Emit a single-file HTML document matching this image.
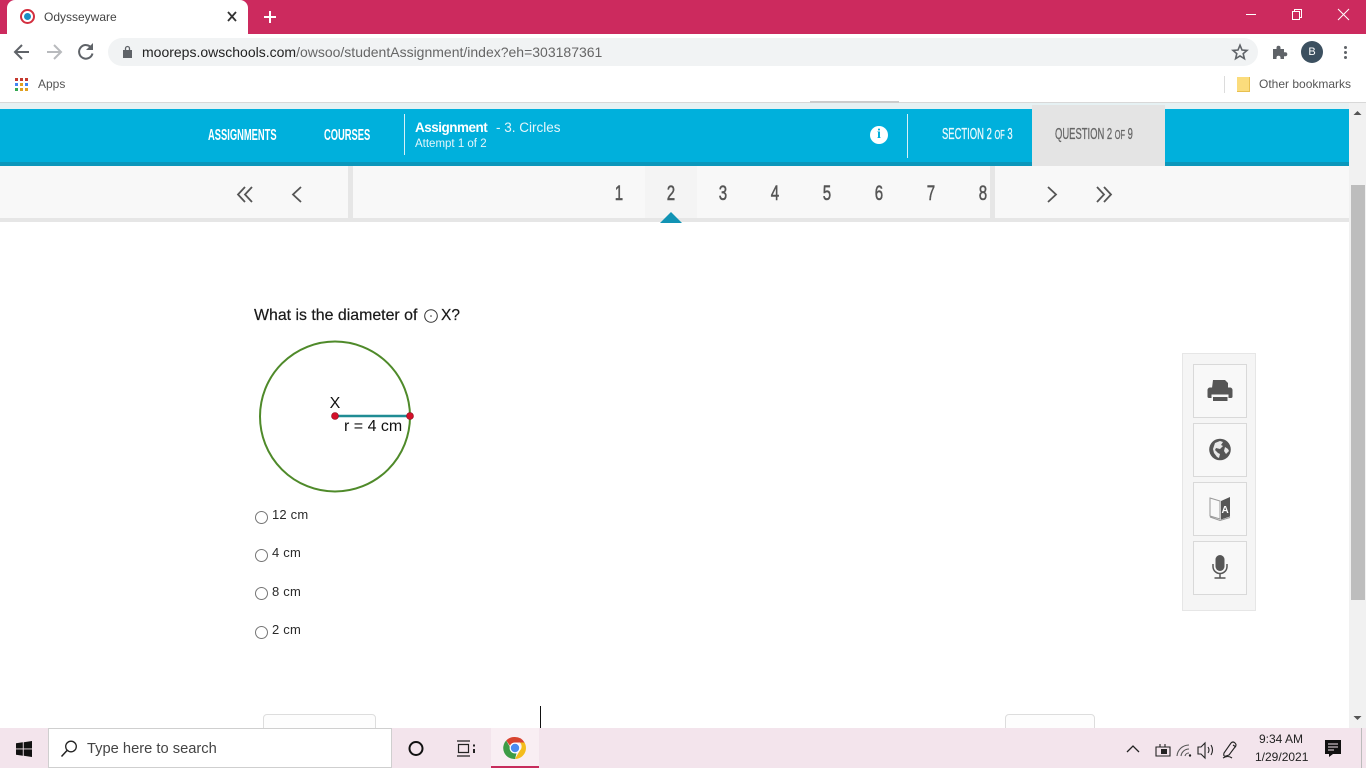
<!DOCTYPE html>
<html><head><meta charset="utf-8"><title>Odysseyware</title>
<style>
html,body{margin:0;padding:0;width:1366px;height:768px;overflow:hidden;background:#fff;font-family:"Liberation Sans",sans-serif}
.a{position:absolute;white-space:nowrap}
.r{position:absolute}
svg{position:absolute;overflow:visible}
.n{transform-origin:0 0;font-size:16px;line-height:18px}
.num{position:absolute;top:183px;width:30px;text-align:center;font:21px/22px "Liberation Sans",sans-serif;color:#555;transform:scaleX(.72);-webkit-text-stroke:.5px #555}
.opt{position:absolute;left:272px;font-size:13px;line-height:16px;color:#2a2a2a;letter-spacing:.2px}
.rad{position:absolute;left:255px;width:11px;height:11px;border:1px solid #767676;border-radius:50%;background:#fff}
.tool{position:absolute;left:1193px;width:52px;background:#f8f8f8;border:1px solid #d9d9d9}
</style></head><body>
<!-- Chrome tabstrip -->
<div class="r" style="left:0;top:0;width:1366px;height:34px;background:#cc2a5e"></div>
<div class="r" style="left:7px;top:0;width:241px;height:34px;background:#fff;border-radius:8px 8px 0 0"></div>
<div class="r" style="left:20px;top:9px;width:11px;height:11px;border:2px solid #d32f3f;border-radius:50%;background:#fff"></div>
<div class="r" style="left:24px;top:13px;width:7px;height:7px;border-radius:50%;background:#1b8fc4"></div>
<div class="a" style="left:44px;top:9px;font-size:12px;line-height:16px;color:#444">Odysseyware</div>
<svg style="left:0;top:0" width="1366" height="34">
<path d="M228 12l8 9M236 12l-8 9" stroke="#333" stroke-width="1.8" fill="none"/>
<path d="M270 11v12M264 17h12" stroke="#fff" stroke-width="2" fill="none"/>
<path d="M1246 14.500h10" stroke="#fff" stroke-width="1" fill="none"/>
<path d="M1292.500 11.500h7v8h-7zM1294.500 11.500v-2h7v8h-2" stroke="#fff" stroke-width="1" fill="none"/>
<path d="M1338 9l11 11M1349 9l-11 11" stroke="#fff" stroke-width="1" fill="none"/>
</svg>
<!-- Toolbar -->
<svg style="left:0;top:34px" width="110" height="36">
<path d="M29 18H16M22 11l-7 7 7 7" stroke="#5f6368" stroke-width="2" fill="none"/>
<path d="M47 18h13M54 11l7 7-7 7" stroke="#b8babd" stroke-width="2" fill="none"/>
<path d="M91.500 14a6.800 6.800 0 1 0 1 5.500" stroke="#5f6368" stroke-width="2" fill="none"/>
<path d="M93 9v7h-7z" fill="#5f6368"/>
</svg>
<div class="r" style="left:108px;top:38px;width:1150px;height:28px;background:#f1f3f4;border-radius:14px"></div>
<svg style="left:122px;top:45px" width="12" height="14"><path d="M1.500 5.500h8v7h-8z" fill="#5f6368" stroke="#5f6368"/><path d="M3.500 5.500V3.500a2 2 0 0 1 4 0v2" stroke="#5f6368" stroke-width="1.300" fill="none"/></svg>
<div class="a" style="left:142px;top:44px;font-size:14px;line-height:16px;color:#666"><span style="color:#222">mooreps.owschools.com</span>/owsoo/studentAssignment/index?eh=303187361</div>
<svg style="left:1230px;top:42px" width="20" height="20"><path d="M10 3.200l2 4.800 5 .4-3.800 3.300 1.200 5-4.400-2.700-4.400 2.700 1.200-5-3.800-3.300 5-.4z" fill="none" stroke="#5f6368" stroke-width="1.600"/></svg>
<svg style="left:1270px;top:42px" width="20" height="20"><path d="M3 7h3.500V5.800a2 2 0 0 1 4 0V7H14v3.200h1.300a2 2 0 0 1 0 4H14V17H10.500v-1.300a2 2 0 0 0-4 0V17H3z" fill="#5f6368"/></svg>
<div class="r" style="left:1301px;top:41px;width:22px;height:22px;border-radius:50%;background:#3c5060;color:#fff;font-size:11px;line-height:22px;text-align:center">B</div>
<div class="r" style="left:1343.500px;top:46px;width:3px;height:3px;background:#5f6368;border-radius:50%;box-shadow:0 5px 0 #5f6368,0 10px 0 #5f6368"></div>
<!-- Bookmarks -->
<svg style="left:15px;top:78px" width="14" height="14">
<g><rect x="0" y="0" width="3" height="3" fill="#c5392f"/><rect x="5" y="0" width="3" height="3" fill="#c5392f"/><rect x="10" y="0" width="3" height="3" fill="#c5392f"/><rect x="0" y="5" width="3" height="3" fill="#4285f4"/><rect x="5" y="5" width="3" height="3" fill="#e0a020"/><rect x="10" y="5" width="3" height="3" fill="#4285f4"/><rect x="0" y="10" width="3" height="3" fill="#34a853"/><rect x="5" y="10" width="3" height="3" fill="#e0a020"/><rect x="10" y="10" width="3" height="3" fill="#e0a020"/></g></svg>
<div class="a" style="left:38px;top:76px;font-size:12px;line-height:16px;color:#555">Apps</div>
<div class="r" style="left:1224px;top:76px;width:1px;height:17px;background:#dcdcdc"></div>
<div class="r" style="left:1237px;top:77px;width:12px;height:14px;background:#fbdc7c;border-right:1px solid #e8c050;border-bottom:1px solid #e8c050"></div>
<div class="a" style="left:1259px;top:76px;font-size:12px;line-height:16px;color:#555">Other bookmarks</div>
<div class="r" style="left:0;top:102px;width:1366px;height:1px;background:#d8d8d8"></div>
<div class="r" style="left:810px;top:101px;width:89px;height:2px;background:#ccc"></div>
<div class="r" style="left:0;top:103px;width:1349px;height:6px;background:#e6f1f3"></div>
<!-- Blue header -->
<div class="r" style="left:0;top:109px;width:1349px;height:53px;background:#00b0dc"></div>
<div class="r" style="left:0;top:162px;width:1349px;height:4px;background:#0b97bb"></div>
<div class="r" style="left:1032px;top:105px;width:133px;height:61px;background:#e4e4e4"></div>
<div class="a n" style="left:208px;top:127px;color:#fff;font-weight:700;transform:scaleX(.585)">ASSIGNMENTS</div>
<div class="a n" style="left:324px;top:127px;color:#fff;font-weight:700;transform:scaleX(.585)">COURSES</div>
<div class="r" style="left:404px;top:114px;width:1px;height:41px;background:#d5f1f8"></div>
<div class="a" style="left:415px;top:119px;font-size:13.500px;line-height:17px;color:#fff;letter-spacing:-.5px"><b>Assignment</b></div>
<div class="a" style="left:496px;top:119px;font-size:13.500px;line-height:17px;color:#e4f6fb">- 3. Circles</div>
<div class="a" style="left:415px;top:137px;font-size:11.500px;line-height:15px;color:#e4f6fb">Attempt 1 of 2</div>
<div class="r" style="left:870px;top:126px;width:18px;height:18px;border-radius:50%;background:#fff;color:#00b0dc;font:bold 14px/18px 'Liberation Serif',serif;text-align:center">i</div>
<div class="r" style="left:907px;top:114px;width:1px;height:44px;background:#d5f1f8"></div>
<div class="a n" style="left:942px;top:126px;color:#e8f8fc;transform:scaleX(.59);-webkit-text-stroke:.3px #e8f8fc">SECTION 2 <span style="font-size:12.500px">OF</span> 3</div>
<div class="a n" style="left:1055px;top:126px;color:#666;transform:scaleX(.59);-webkit-text-stroke:.3px #666">QUESTION 2 <span style="font-size:12.500px">OF</span> 9</div>
<!-- Nav bar -->
<div class="r" style="left:0;top:166px;width:1349px;height:52px;background:#f8f8f8"></div>
<div class="r" style="left:0;top:218px;width:1349px;height:4px;background:#e6e6e6"></div>
<div class="r" style="left:348px;top:166px;width:5px;height:52px;background:#e6e6e6"></div>
<div class="r" style="left:990px;top:166px;width:5px;height:52px;background:#e6e6e6"></div>
<div class="r" style="left:645px;top:166px;width:52px;height:52px;background:#f4f4f4"></div>
<svg style="left:0;top:166px" width="1349" height="60">
<g fill="none" stroke="#555" stroke-width="1.800">
<path d="M245 21l-7 7.500 7 7.500M252 21l-7 7.500 7 7.500"/>
<path d="M301 21l-8 7.500 8 7.500"/>
<path d="M1048 21l8 7.500-8 7.500"/>
<path d="M1097 21l7 7.500-7 7.500M1104 21l7 7.500-7 7.500"/>
</g>
<path d="M660 57l11-11 11 11z" fill="#1193b4"/>
</svg>
<div class="num" style="left:604px">1</div>
<div class="num" style="left:656px">2</div>
<div class="num" style="left:708px">3</div>
<div class="num" style="left:760px">4</div>
<div class="num" style="left:812px">5</div>
<div class="num" style="left:864px">6</div>
<div class="num" style="left:916px">7</div>
<div class="num" style="left:968px">8</div>
<!-- Question -->
<div class="a" style="left:254px;top:307px;font-size:15.900px;line-height:18px;color:#1a1a1a;-webkit-text-stroke:.2px #1a1a1a">What is the diameter of</div>
<svg style="left:424px;top:309px" width="14" height="14"><circle cx="7" cy="7" r="6.300" fill="none" stroke="#333" stroke-width="1"/><circle cx="7" cy="7" r=".8" fill="#333"/></svg>
<div class="a" style="left:441px;top:307px;font-size:15.500px;line-height:18px;color:#1a1a1a;-webkit-text-stroke:.2px #1a1a1a">X?</div>
<svg style="left:240px;top:330px" width="190" height="170">
<circle cx="95" cy="86.500" r="75" fill="#fff" stroke="#4f8a2a" stroke-width="2"/>
<path d="M95 86h75" stroke="#1f8c94" stroke-width="2.400"/>
<circle cx="95" cy="86" r="3.500" fill="#d3102a" stroke="#8a1020" stroke-width=".6"/>
<circle cx="170" cy="86" r="3.500" fill="#d3102a" stroke="#8a1020" stroke-width=".6"/>
<text x="95" y="78" text-anchor="middle" font-family="Liberation Sans" font-size="16" fill="#111">X</text>
<text x="104" y="101" font-family="Liberation Sans" font-size="16" fill="#111">r = 4 cm</text>
</svg>
<div class="rad" style="top:511px"></div><div class="opt" style="top:507px">12 cm</div>
<div class="rad" style="top:549px"></div><div class="opt" style="top:545px">4 cm</div>
<div class="rad" style="top:587px"></div><div class="opt" style="top:584px">8 cm</div>
<div class="rad" style="top:626px"></div><div class="opt" style="top:622px">2 cm</div>
<!-- Side tools -->
<div class="r" style="left:1182px;top:353px;width:72px;height:256px;background:#f5f5f5;border:1px solid #e6e6e6"></div>
<div class="tool" style="top:364px;height:52px"></div>
<div class="tool" style="top:423px;height:52px"></div>
<div class="tool" style="top:482px;height:52px"></div>
<div class="tool" style="top:541px;height:52px"></div>
<svg style="left:1193px;top:364px" width="54" height="232">
<!-- printer -->
<path d="M20 16h12l3 3v5H19z" fill="#565656"/>
<path d="M17 23.500h20a2.500 2.500 0 0 1 2.500 2.500v6.500a1.500 1.500 0 0 1-1.500 1.500h-2.500v-3.500h-17V34H16a1.500 1.500 0 0 1-1.500-1.500V26a2.500 2.500 0 0 1 2.500-2.500z" fill="#565656"/>
<rect x="20" y="33" width="14.500" height="4" fill="#565656"/>
<rect x="19" y="30.500" width="16" height="2.500" fill="#f8f8f8"/>
<!-- globe -->
<circle cx="27" cy="85.500" r="10.800" fill="#565656"/>
<path d="M22 79l5-2 3 1-2 3 2 1-3 3-4-1-1 2 3 3 2 1-1 4-2-1-3-4-1-4z" fill="#f8f8f8" opacity=".9"/>
<path d="M32 83l3 2 1 2-3 3-2-3z" fill="#f8f8f8" opacity=".9"/>
<!-- translate -->
<path d="M28 137l9-4v19.500l-9 3z" fill="#565656"/>
<path d="M17 134l10 3v18l-10-3zM17 153l10 3.500 10-3" fill="none" stroke="#999" stroke-width="1"/>
<text x="28.500" y="149" font-family="Liberation Sans" font-size="10" font-weight="700" fill="#fff">A</text>
<!-- mic -->
<rect x="22.500" y="191" width="9" height="16" rx="4.500" fill="#565656"/>
<path d="M20 200v2.500a7 7 0 0 0 14 0V200M27 210v3.500M21.500 214h11" fill="none" stroke="#565656" stroke-width="1.500"/>
</svg>
<!-- Bottom buttons -->
<div class="r" style="left:263px;top:714px;width:111px;height:20px;border:1px solid #ddd;border-radius:4px;background:#fdfdfd"></div>
<div class="r" style="left:1005px;top:714px;width:88px;height:20px;border:1px solid #ddd;border-radius:4px;background:#fdfdfd"></div>
<div class="r" style="left:540px;top:706px;width:1px;height:22px;background:#111"></div>
<!-- Scrollbar -->
<div class="r" style="left:1349px;top:103px;width:17px;height:625px;background:#f1f1f1"></div>
<div class="r" style="left:1351px;top:185px;width:14px;height:415px;background:#bdbdbd"></div>
<svg style="left:1349px;top:103px" width="17" height="625"><path d="M8.500 8l4 4h-8z" fill="#555"/><path d="M4.500 613h8l-4 4z" fill="#555"/></svg>
<!-- Taskbar -->
<div class="r" style="left:0;top:728px;width:1366px;height:40px;background:#f3e4ec"></div>
<svg style="left:16px;top:741px" width="16" height="16"><path d="M0 2.300l6.800-1V7.500H0zM7.700 1.200L16 0v7.500H7.700zM0 8.400h6.800v6.300l-6.800-1zM7.700 8.400H16V16l-8.300-1.200z" fill="#111"/></svg>
<div class="r" style="left:48px;top:728px;width:342px;height:38px;background:#fff;border:1px solid #cfcfcf"></div>
<svg style="left:60px;top:739px" width="20" height="20"><circle cx="11" cy="7.500" r="5.300" fill="none" stroke="#222" stroke-width="1.300"/><path d="M7 11.500L1.500 17.500" stroke="#222" stroke-width="1.500"/></svg>
<div class="a" style="left:87px;top:740px;font-size:14.700px;line-height:19px;color:#444">Type here to search</div>
<svg style="left:405px;top:738px" width="70" height="22">
<circle cx="11" cy="10.500" r="6.500" fill="none" stroke="#111" stroke-width="2"/>
<path d="M52 3h13M52 18h13M53.500 6.500h10v8h-10z" fill="none" stroke="#222" stroke-width="1.200"/><path d="M68 6.500h2v2h-2zM68 11h2v4h-2z" fill="#222"/>
</svg>
<div class="r" style="left:491px;top:728px;width:48px;height:38px;background:#f9eef3"></div>
<div class="r" style="left:491px;top:766px;width:48px;height:2px;background:#c72c5c"></div>
<svg style="left:503px;top:736px" width="24" height="24" viewBox="0 0 24 24">
<path d="M12 1a11 11 0 0 1 9.500 5.500H12a5.500 5.500 0 0 0-5 3.200L3.200 4.500A11 11 0 0 1 12 1z" fill="#d8432f"/>
<path d="M21.500 6.500A11 11 0 0 1 12 23l4.700-8.300a5.500 5.500 0 0 0 .2-8.200z" fill="#f4bc1c"/>
<path d="M3.200 4.500L7.500 12a5.500 5.500 0 0 0 6 5.300L12 23A11 11 0 0 1 3.200 4.500z" fill="#3d9c46"/>
<circle cx="12" cy="12" r="5.400" fill="#fff"/><circle cx="12" cy="12" r="4.200" fill="#4c8bf0"/>
</svg>
<svg style="left:1120px;top:736px" width="130" height="26" fill="none" stroke="#222" stroke-width="1.100">
<path d="M7 16l6-6 6 6" stroke-width="1.300"/>
<path d="M36 11h14v9H36zM40 8v3M45 8v3" />
<rect x="41" y="13" width="6" height="5" fill="#222" stroke="none"/>
<path d="M57 20a12 12 0 0 1 12-11M61 20a8 8 0 0 1 8-7M65 20a4 4 0 0 1 4-3" stroke="#555"/>
<circle cx="70" cy="19.500" r="1.200" fill="#222" stroke="none"/>
<path d="M78 11h3l4-4v15l-4-4h-3zM88 11q2 3 0 6M91 9q3 5 0 10" />
<path d="M106 20q-3 1-2-3l7-10q2-2 4 0t0 4l-6 8zM113 9l3 2M103 22q5-3 9 0" />
</svg>
<div class="a" style="left:1259px;top:731px;font-size:12px;line-height:16px;color:#222">9:34 AM</div>
<div class="a" style="left:1255px;top:749px;font-size:12px;line-height:16px;color:#222">1/29/2021</div>
<svg style="left:1324px;top:739px" width="20" height="20"><path d="M1 1h16v14H9l-4 3v-3H1z" fill="#111"/><path d="M4 5h10M4 8h10M4 11h6" stroke="#f3e4ec" stroke-width="1"/></svg>
<div class="r" style="left:1361px;top:728px;width:1px;height:40px;background:#bbb"></div>
</body></html>
